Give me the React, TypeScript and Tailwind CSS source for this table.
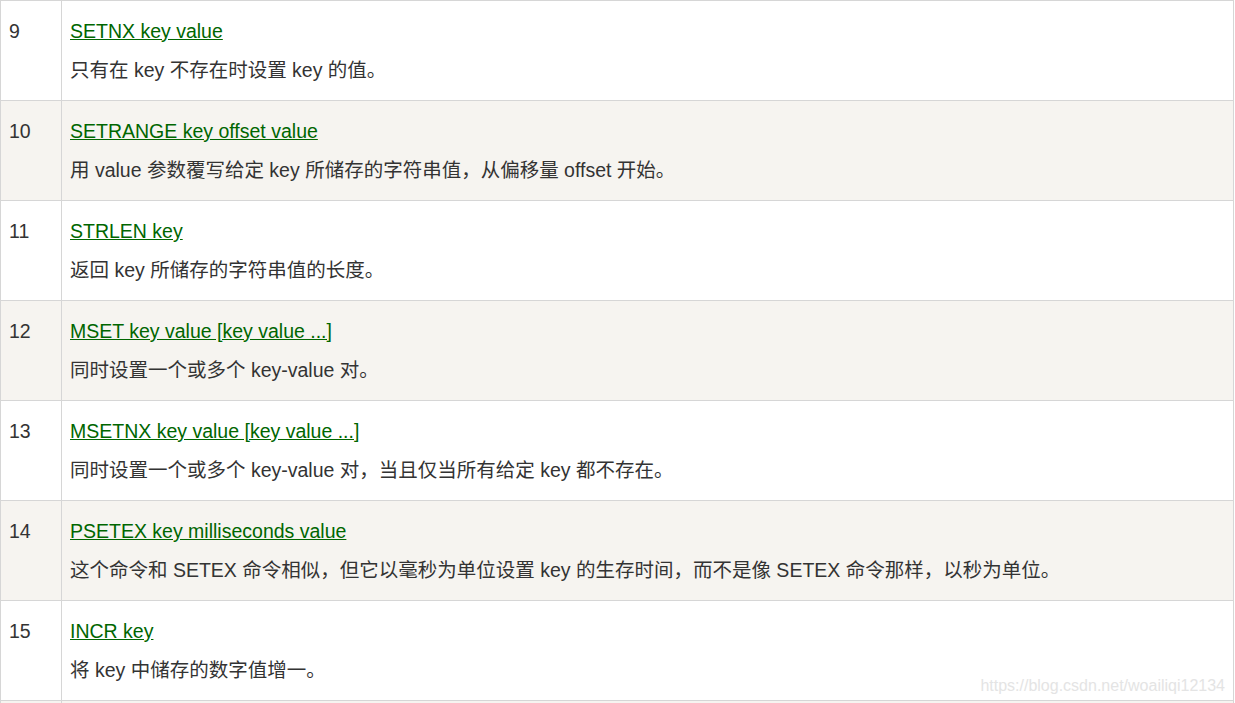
import React from "react";

const rows = [
  { n: "9", cmd: "SETNX key value", desc: "只有在 key 不存在时设置 key 的值。" },
  { n: "10", cmd: "SETRANGE key offset value", desc: "用 value 参数覆写给定 key 所储存的字符串值，从偏移量 offset 开始。" },
  { n: "11", cmd: "STRLEN key", desc: "返回 key 所储存的字符串值的长度。" },
  { n: "12", cmd: "MSET key value [key value ...]", desc: "同时设置一个或多个 key-value 对。" },
  { n: "13", cmd: "MSETNX key value [key value ...]", desc: "同时设置一个或多个 key-value 对，当且仅当所有给定 key 都不存在。" },
  { n: "14", cmd: "PSETEX key milliseconds value", desc: "这个命令和 SETEX 命令相似，但它以毫秒为单位设置 key 的生存时间，而不是像 SETEX 命令那样，以秒为单位。" },
  { n: "15", cmd: "INCR key", desc: "将 key 中储存的数字值增一。" },
];

export default function App() {
  return (
    <div
      className="relative h-[703px] w-[1235px] overflow-hidden bg-white text-[19.5px] text-[#333333]"
      style={{ fontFamily: '"Liberation Sans", Arial, "Noto Sans CJK SC", sans-serif' }}
    >
      <div className="w-[1234px] border-t border-l border-r border-[#d6d6d6]">
        {rows.map((r, i) => (
          <div
            key={r.n}
            className={`flex h-[100px] border-b border-[#d6d6d6] ${i % 2 === 1 ? "bg-[#f6f4f0]" : "bg-white"}`}
          >
            <div className="w-[61px] shrink-0 border-r border-[#d6d6d6] pl-[8px] pt-[11px]">
              <div className="h-[39px] leading-[39px]">{r.n}</div>
            </div>
            <div className="flex-1 pl-[8px] pt-[11px]">
              <div className="h-[39px] leading-[39px] whitespace-nowrap">
                <a href="#" className="text-[#006600] underline">
                  {r.cmd}
                </a>
              </div>
              <div className="h-[39px] leading-[39px] whitespace-nowrap">{r.desc}</div>
            </div>
          </div>
        ))}
        <div className="flex h-[100px] bg-[#f6f4f0]">
          <div className="w-[61px] shrink-0 border-r border-[#d6d6d6]" />
          <div className="flex-1" />
        </div>
      </div>
      <div
        className="absolute right-[10px] top-[676px] text-[16px] leading-[20px] text-[#e4e4e4]"
        style={{ fontFamily: '"Liberation Sans", Arial, sans-serif' }}
      >
        https://blog.csdn.net/woailiqi12134
      </div>
    </div>
  );
}
